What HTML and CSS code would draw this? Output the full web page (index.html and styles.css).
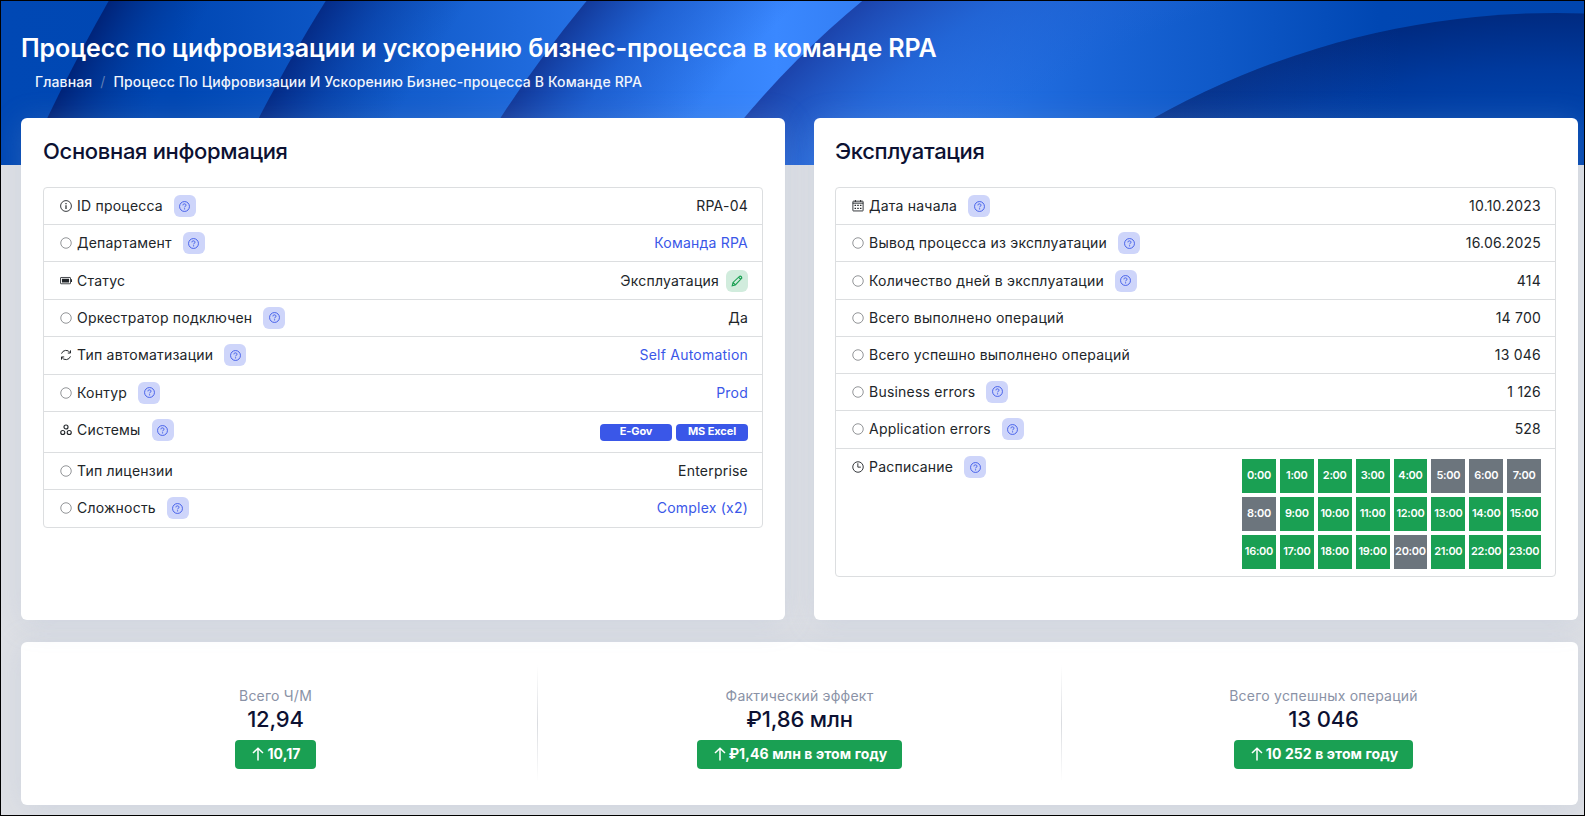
FILE: index.html
```html
<!DOCTYPE html>
<html lang="ru">
<head>
<meta charset="utf-8">
<title>Процесс</title>
<link rel="stylesheet" href="styles.css">
</head>
<body>
<svg class="defs" width="0" height="0">
  <symbol id="info" viewBox="0 0 16 16"><circle cx="8" cy="8" r="7.2" fill="none" stroke="currentColor" stroke-width="1.2"/><path d="M7.2 4h1.6v1.7H7.2zM7.2 7h1.6v5H7.2z"/></symbol>
  <symbol id="ring" viewBox="0 0 16 16"><circle cx="8" cy="8" r="7" fill="none" stroke="currentColor" stroke-width=".8"/></symbol>
  <symbol id="battery" viewBox="0 0 16 16"><rect x=".7" y="3.3" width="13.3" height="8.4" rx=".6" fill="none" stroke="currentColor" stroke-width="1.1"/><path d="M2.6 5.1h9.5v4.8H2.6zM14.7 5.8h1.3v3.4h-1.3z"/></symbol>
  <symbol id="repeat" viewBox="0 0 16 16"><path d="M2 6.2A6.4 6.4 0 0 1 13.6 5M14 9.8A6.4 6.4 0 0 1 2.4 11M14 1.8v3.6h-3.6M2 14.2v-3.6h3.6" fill="none" stroke="currentColor" stroke-width="1.3"/></symbol>
  <symbol id="systems" viewBox="0 0 16 16"><g fill="none" stroke="currentColor" stroke-width="1.5"><circle cx="8" cy="4" r="2.7"/><circle cx="3.7" cy="11.3" r="2.7"/><circle cx="12.3" cy="11.3" r="2.7"/></g></symbol>
  <symbol id="calendar" viewBox="0 0 16 16"><rect x="1.2" y="1.6" width="13.6" height="13" rx=".6" fill="none" stroke="currentColor" stroke-width="1.2"/><path d="M1 4.2h14M4.5 0v2.5M11.5 0v2.5" stroke="currentColor" stroke-width="1.3"/><path d="M3.4 6.4h2v1.7h-2zM7 6.4h2v1.7H7zM10.6 6.4h2v1.7h-2zM3.4 10.2h2v1.7h-2zM7 10.2h2v1.7H7zM10.6 10.2h2v1.7h-2z"/></symbol>
  <symbol id="clock" viewBox="0 0 16 16"><circle cx="8" cy="8" r="7" fill="none" stroke="currentColor" stroke-width="1.2"/><path d="M7.8 3v5.2h4" fill="none" stroke="currentColor" stroke-width="1.2"/></symbol>
  <symbol id="question" viewBox="0 0 16 16"><circle cx="8" cy="8" r="7.2" fill="none" stroke="currentColor" stroke-width="1.3"/><path d="M5.7 6.3c0-1.4.9-2.1 2.2-2.1s2.3.7 2.3 2c0 1.5-2.1 1.5-2.1 3" fill="none" stroke="currentColor" stroke-width="1.4"/><circle cx="8.1" cy="11.4" r=".95"/></symbol>
  <symbol id="pencil" viewBox="0 0 16 16"><path d="M1.6 14.4l1.1-4.5L11.6 1.6q2.4-.4 2.8 2.5L5.8 13.2zM2.7 9.9l3.1 3.3M10.3 3.2l2.6 2.5" fill="none" stroke="currentColor" stroke-width="1.5"/></symbol>
  <symbol id="up" viewBox="0 0 12 14"><path d="M6 13.4V1.4M1 6l5-4.8L11 6" fill="none" stroke="currentColor" stroke-width="1.5"/></symbol>
</svg>
<div class="page">
  <header class="hero">
    <svg class="hero-art" viewBox="0 0 1583 164" preserveAspectRatio="none" aria-hidden="true">
      <defs>
        <linearGradient id="base" gradientUnits="userSpaceOnUse" x1="0" y1="0" x2="1583" y2="0">
          <stop offset="0" stop-color="#0048b4"/><stop offset=".11" stop-color="#0047b3"/><stop offset=".2" stop-color="#0c55c4"/><stop offset=".28" stop-color="#1660d0"/><stop offset=".37" stop-color="#2571e5"/><stop offset=".49" stop-color="#3a88ff"/><stop offset=".54" stop-color="#347ff5"/><stop offset=".6" stop-color="#2875e8"/><stop offset=".68" stop-color="#1b66d8"/><stop offset=".77" stop-color="#0f59c8"/><stop offset=".87" stop-color="#0047b3"/><stop offset="1" stop-color="#0045ae"/>
        </linearGradient>
        <radialGradient id="s1" gradientUnits="userSpaceOnUse" cx="1847" cy="989" r="2000"><stop offset=".955" stop-color="#003a9e" stop-opacity="0"/><stop offset=".978" stop-color="#00308c" stop-opacity=".5"/><stop offset="1" stop-color="#00247a"/></radialGradient>
        <radialGradient id="s2" gradientUnits="userSpaceOnUse" cx="1680" cy="852" r="1600"><stop offset=".925" stop-color="#0a45a8" stop-opacity="0"/><stop offset=".968" stop-color="#07389a" stop-opacity=".55"/><stop offset="1" stop-color="#052c88"/></radialGradient>
        <radialGradient id="s3" gradientUnits="userSpaceOnUse" cx="1588" cy="829" r="1300"><stop offset=".88" stop-color="#1c58c8" stop-opacity="0"/><stop offset=".95" stop-color="#1853c2" stop-opacity=".6"/><stop offset="1" stop-color="#133a9b"/></radialGradient>
        <radialGradient id="s4" gradientUnits="userSpaceOnUse" cx="1434" cy="695" r="900"><stop offset=".8" stop-color="#2465d6" stop-opacity="0"/><stop offset=".91" stop-color="#2060d0" stop-opacity=".75"/><stop offset="1" stop-color="#1c44ac"/></radialGradient>
        <radialGradient id="s5" gradientUnits="userSpaceOnUse" cx="1554" cy="833" r="822"><stop offset=".86" stop-color="#0046b0"/><stop offset=".93" stop-color="#003a9e"/><stop offset="1" stop-color="#002a80"/></radialGradient>
        <linearGradient id="tint" gradientUnits="userSpaceOnUse" x1="1150" y1="0" x2="1400" y2="0"><stop offset="0" stop-color="#2a62c8" stop-opacity=".25"/><stop offset="1" stop-color="#2a62c8" stop-opacity="0"/></linearGradient>
      </defs>
      <rect width="1583" height="164" fill="url(#base)"/>
      <circle cx="1846" cy="989" r="2000" fill="url(#s1)"/>
      <circle cx="1679" cy="852" r="1600" fill="url(#s2)"/>
      <circle cx="1587" cy="829" r="1300" fill="url(#s3)"/>
      <circle cx="1433" cy="695" r="900" fill="url(#s4)"/>
      <circle cx="1555" cy="834" r="822" fill="url(#s5)"/>
      <circle cx="1555" cy="834" r="822" fill="url(#tint)"/>
    </svg>
    <div class="hero-text">
      <h1><span>Процесс по цифровизации и ускорению бизнес-процесса в команде RPA</span></h1>
      <nav class="crumbs"><span class="c1">Главная</span><i>/</i><span class="c2">Процесс По Цифровизации И Ускорению Бизнес-процесса В Команде RPA</span></nav>
    </div>
  </header>
  <main class="content">
    <div class="columns">
      <section class="card info">
        <h2><span>Основная информация</span></h2>
        <ul class="list">
          <li><svg class="icon"><use href="#info"/></svg><span class="label">ID процесса</span><b class="help"><svg><use href="#question"/></svg></b><span class="value">RPA-04</span></li>
          <li><svg class="icon ring"><use href="#ring"/></svg><span class="label">Департамент</span><b class="help"><svg><use href="#question"/></svg></b><a class="value">Команда RPA</a></li>
          <li class="tall"><svg class="icon"><use href="#battery"/></svg><span class="label">Статус</span><span class="value">Эксплуатация</span><b class="edit"><svg><use href="#pencil"/></svg></b></li>
          <li><svg class="icon ring"><use href="#ring"/></svg><span class="label">Оркестратор подключен</span><b class="help"><svg><use href="#question"/></svg></b><span class="value">Да</span></li>
          <li class="tall"><svg class="icon"><use href="#repeat"/></svg><span class="label">Тип автоматизации</span><b class="help"><svg><use href="#question"/></svg></b><a class="value">Self Automation</a></li>
          <li><svg class="icon ring"><use href="#ring"/></svg><span class="label">Контур</span><b class="help"><svg><use href="#question"/></svg></b><a class="value">Prod</a></li>
          <li class="systems"><svg class="icon"><use href="#systems"/></svg><span class="label">Системы</span><b class="help"><svg><use href="#question"/></svg></b><span class="value tags"><em>E-Gov</em><em>MS Excel</em></span></li>
          <li><svg class="icon ring"><use href="#ring"/></svg><span class="label">Тип лицензии</span><span class="value">Enterprise</span></li>
          <li class="tall"><svg class="icon ring"><use href="#ring"/></svg><span class="label">Сложность</span><b class="help"><svg><use href="#question"/></svg></b><a class="value">Complex (x2)</a></li>
        </ul>
      </section>
      <section class="card info">
        <h2><span>Эксплуатация</span></h2>
        <ul class="list">
          <li><svg class="icon"><use href="#calendar"/></svg><span class="label">Дата начала</span><b class="help"><svg><use href="#question"/></svg></b><span class="value">10.10.2023</span></li>
          <li><svg class="icon ring"><use href="#ring"/></svg><span class="label">Вывод процесса из эксплуатации</span><b class="help"><svg><use href="#question"/></svg></b><span class="value">16.06.2025</span></li>
          <li class="tall"><svg class="icon ring"><use href="#ring"/></svg><span class="label">Количество дней в эксплуатации</span><b class="help"><svg><use href="#question"/></svg></b><span class="value">414</span></li>
          <li><svg class="icon ring"><use href="#ring"/></svg><span class="label">Всего выполнено операций</span><span class="value">14 700</span></li>
          <li><svg class="icon ring"><use href="#ring"/></svg><span class="label">Всего успешно выполнено операций</span><span class="value">13 046</span></li>
          <li><svg class="icon ring"><use href="#ring"/></svg><span class="label">Business errors</span><b class="help"><svg><use href="#question"/></svg></b><span class="value">1 126</span></li>
          <li class="tall"><svg class="icon ring"><use href="#ring"/></svg><span class="label">Application errors</span><b class="help"><svg><use href="#question"/></svg></b><span class="value">528</span></li>
          <li class="schedule"><svg class="icon"><use href="#clock"/></svg><span class="label">Расписание</span><b class="help"><svg><use href="#question"/></svg></b>
            <div class="hours">
              <span>0:00</span><span>1:00</span><span>2:00</span><span>3:00</span><span>4:00</span><span class="off">5:00</span><span class="off">6:00</span><span class="off">7:00</span>
              <span class="off">8:00</span><span>9:00</span><span>10:00</span><span>11:00</span><span>12:00</span><span>13:00</span><span>14:00</span><span>15:00</span>
              <span>16:00</span><span>17:00</span><span>18:00</span><span>19:00</span><span class="off">20:00</span><span>21:00</span><span>22:00</span><span>23:00</span>
            </div>
          </li>
        </ul>
      </section>
    </div>
    <section class="card stats">
      <div class="stat"><span class="stat-label">Всего Ч/М</span><strong>12,94</strong><span class="badge"><svg><use href="#up"/></svg><span>10,17</span></span></div>
      <div class="stat"><span class="stat-label">Фактический эффект</span><strong>₽1,86 млн</strong><span class="badge"><svg><use href="#up"/></svg><span>₽1,46 млн в этом году</span></span></div>
      <div class="stat"><span class="stat-label">Всего успешных операций</span><strong>13 046</strong><span class="badge"><svg><use href="#up"/></svg><span>10 252 в этом году</span></span></div>
    </section>
  </main>
</div>
</body>
</html>
```
FILE: styles.css
```css
* { box-sizing: border-box; }
body { margin: 0; overflow: hidden; font-family: Inter, "Liberation Sans", sans-serif; font-size: 14px; color: #212529; }
.defs { position: absolute; }
.page { width: 1585px; height: 816px; border: 1px solid #000; background: #dee0e5; overflow: hidden; }

.hero { position: relative; height: 164px; }
.hero-art { position: absolute; inset: 0; width: 100%; height: 100%; display: block; }
.hero-text { position: relative; padding: 30px 0 0 20px; color: #fff; }
h1 { margin: 0; font-size: 25px; line-height: 34px; font-weight: 600; letter-spacing: -.1px; white-space: nowrap; }
.crumbs { display: flex; gap: 8px; padding: 7px 0 0 14px; font-size: 14px; line-height: 20px; font-weight: 500; letter-spacing: .12px; color: #f1f5fc; white-space: nowrap; }
.crumbs i { font-style: normal; font-weight: 400; color: #5f7fb5; }

.content { position: relative; margin: -47px 6px 0 20px; }
.columns { display: grid; grid-template-columns: 1fr 1fr; gap: 29px; }
.card { background: #fff; border-radius: 6px; box-shadow: 0 3px 30px rgba(150, 170, 200, .22); }
.info { height: 502px; padding: 20px 22px 0; }
.info + .info { padding-left: 21px; }
h2 { margin: 0 0 23px; font-size: 22px; line-height: 26px; font-weight: 500; letter-spacing: -.32px; color: #0c1132; white-space: nowrap; }

.list { margin: 0; padding: 0; list-style: none; border: 1px solid #dcdee0; border-radius: 4px; }
.list li { display: flex; align-items: center; height: 37px; padding: 0 14px 0 16px; border-bottom: 1px solid #dcdee0; white-space: nowrap; letter-spacing: .22px; }
.list li:nth-child(n+4) { padding-bottom: 1px; }
.list li.tall { height: 38px; }
.list li:last-child { border-bottom: 0; }
.list li:last-child.tall { height: 37px; }
.icon { width: 12px; height: 12px; margin-right: 5px; fill: currentColor; flex: none; overflow: visible; }
.ring { color: #4b4f54; }
.label { line-height: 20px; }
.value { margin-left: auto; line-height: 20px; }
a.value { color: #3a57e8; }
.help, .edit { display: flex; align-items: center; justify-content: center; width: 22px; height: 22px; border-radius: 6px; flex: none; }
.help { margin-left: 11px; background: #ced5fa; color: #3a57e8; }
.edit { margin-left: 7px; background: #d1ecdd; color: #1aa053; }
.help svg { width: 11px; height: 11px; fill: currentColor; }
.edit svg { width: 12px; height: 12px; }
.list li.systems { height: 41px; padding-bottom: 4px; }
.tags { display: flex; gap: 4px; padding-top: 5px; }
.tags em { width: 72px; height: 17px; border-radius: 4px; background: #3a57e8; color: #fff; font-style: normal; font-size: 11px; font-weight: 700; line-height: 15px; letter-spacing: -.1px; text-align: center; }
.list li.schedule { height: 127px; align-items: flex-start; }
.schedule .icon { margin-top: 12px; }
.schedule .label { margin-top: 8px; }
.schedule .help { margin-top: 7px; }
.hours { display: grid; grid-template-columns: repeat(8, 1fr); gap: 4px; width: 299px; margin: 10px 0 0 auto; }
.hours span { height: 34px; background: #1aa053; color: #fff; font-size: 11px; font-weight: 600; line-height: 33px; letter-spacing: -.3px; text-align: center; }
.hours .off { background: #6c757d; }

.stats { display: grid; grid-template-columns: repeat(3, 524px); justify-content: center; height: 163px; margin-top: 22px; padding-top: 23px; }
.stat { position: relative; display: flex; flex-direction: column; align-items: center; height: 117px; padding-top: 21px; }
.stat + .stat::before { content: ""; position: absolute; left: -1px; top: 0; width: 1px; height: 117px; background: linear-gradient(transparent, #dadce0, transparent); }
.stat-label { line-height: 20px; color: #8a92a6; letter-spacing: .22px; }
.stat strong { font-size: 22px; line-height: 26px; font-weight: 500; letter-spacing: -.15px; color: #0c1132; }
.badge { display: flex; align-items: center; gap: 3px; height: 29px; margin-top: 8px; padding: 0 15px 2px 17px; border-radius: 4px; background: #1aa053; color: #fff; font-size: 14px; font-weight: 700; letter-spacing: .09px; }
.badge svg { width: 12px; height: 14px; }
```
